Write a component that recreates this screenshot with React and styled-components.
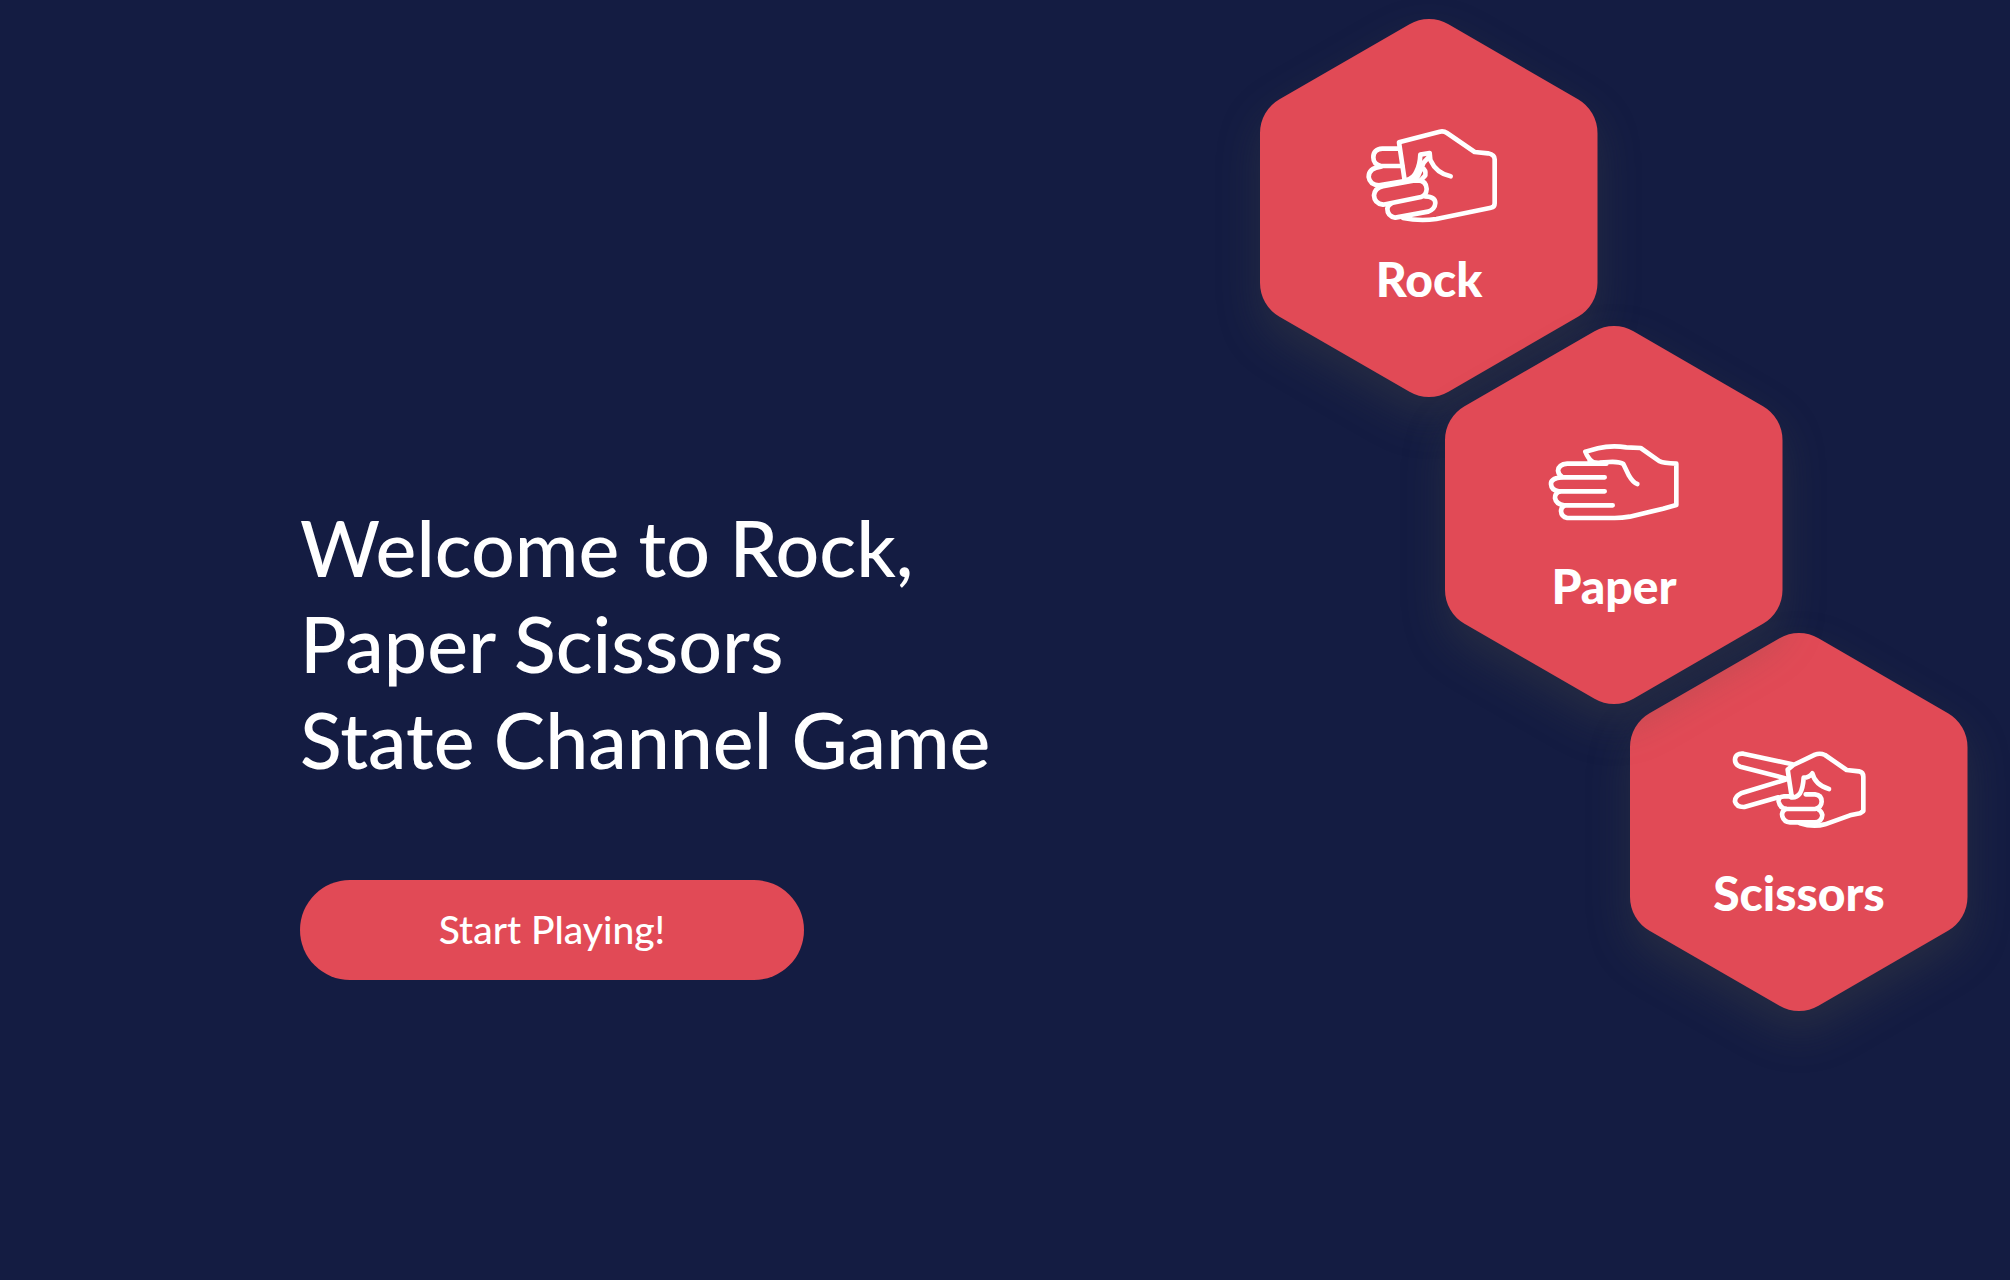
import React from "react";
import styled, { createGlobalStyle } from "styled-components";

const colors = {
  navy: "#141c42",
  coral: "#e14a56",
  white: "#ffffff",
  shadow: "rgba(84, 82, 70, 0.28)",
};

const GlobalStyle = createGlobalStyle`
  *, *::before, *::after { box-sizing: border-box; }
  body {
    margin: 0;
    background: ${colors.navy};
    color: ${colors.white};
    font-family: Lato, "Open Sans", sans-serif;
  }
`;

const Page = styled.main`
  display: flex;
  justify-content: space-between;
  align-items: flex-start;
  min-height: 100vh;
  padding: 19px 42px 0 300px;
`;

const Intro = styled.section`
  display: flex;
  flex-direction: column;
  align-items: flex-start;
  gap: 93px;
  padding-top: 480px;
`;

const Title = styled.h1`
  margin: 0;
  font-size: 77px;
  font-weight: 500;
  line-height: 96px;
  white-space: nowrap;
`;

const StartButton = styled.button`
  width: 504px;
  height: 100px;
  padding: 0 0 3px;
  border: 0;
  border-radius: 50px;
  background: ${colors.coral};
  color: ${colors.white};
  font: 500 39px Lato, "Open Sans", sans-serif;
  cursor: pointer;
`;

const Moves = styled.ul`
  display: flex;
  flex-direction: column;
  margin: 0;
  padding: 0;
  list-style: none;
`;

const Tile = styled.li`
  display: grid;
  grid-template-columns: 338px;
  grid-template-rows: 378px;
  margin-top: ${({ $step }) => ($step ? "-71px" : "0")};
  margin-left: ${({ $step }) => $step * 185}px;
  z-index: ${({ $raised }) => ($raised ? 1 : 0)};
`;

const TileShape = styled.svg`
  grid-area: 1 / 1;
  width: 338px;
  height: 378px;
  overflow: visible;
  fill: ${colors.coral};
  filter: drop-shadow(0 20px 20px ${colors.shadow});
`;

const TileBody = styled.div`
  grid-area: 1 / 1;
  display: flex;
  flex-direction: column;
  align-items: center;
  gap: 19px;
  padding-top: 102px;
  z-index: 1;
`;

const HandIcon = styled.svg`
  width: 160px;
  height: 110px;
  fill: none;
  stroke: ${colors.white};
  stroke-width: 14;
  stroke-linecap: round;
  stroke-linejoin: round;
`;

const Label = styled.span`
  font-size: 48px;
  font-weight: 900;
  line-height: 58px;
`;

const Rock = () => (
  <HandIcon viewBox="-2 3 480 330" aria-hidden="true">
    <path d="M165 181L148 67L270 35Q282 32 292 39L375 96L415 100Q435 104 435 118V250Q435 262 424 263L260 297Q210 304 160 294" />
    <path d="M150 86H98Q71 88 71 112Q71 134 94 138H158" />
    <path d="M94 140Q57 144 57 171Q60 194 88 196L165 183" />
    <path d="M165 183L205 181Q230 182 231 207Q230 226 214 231L100 254Q74 250 73 226Q75 204 100 199L190 182" />
    <path d="M226 229Q257 230 257 249Q256 268 235 275L137 293Q113 288 113 266Q114 256 125 250" />
    <path d="M168 181Q192 176 200 155Q211 135 212 104L240 99L242 120Q260 160 303 169" />
    <path d="M240 108L222 128L205 168L186 181M216 142Q230 150 227 166L214 180" />
  </HandIcon>
);

const Paper = () => (
  <HandIcon viewBox="-2 -6 480 330" aria-hidden="true">
    <path d="M172 94Q160 85 152 65L190 55Q230 45 275 52L318 54L375 94Q385 100 425 101V225L385 236L285 260Q262 264 240 264H98Q80 260 79 243Q80 230 92 226H234" />
    <path d="M215 101H98Q72 103 70 122Q72 136 84 142H210" />
    <path d="M80 142Q48 145 49 162Q50 180 72 184H210" />
    <path d="M76 184Q60 190 61 204Q64 222 88 226" />
    <path d="M165 92Q175 99 195 98L222 96Q255 94 266 102L283 137Q295 158 308 162" />
  </HandIcon>
);

const Scissors = () => (
  <HandIcon viewBox="2 0 480 330" aria-hidden="true">
    <path d="M222 88L75 56Q51 54 50 74Q50 90 66 95L205 131" />
    <path d="M205 133L68 175Q49 184 50 200Q55 217 78 216L180 187" />
    <path d="M220 184L214 145L208 104L225 90L290 59Q305 53 320 60L385 105L422 109Q435 112 435 125V228L425 235L395 241L320 268Q285 278 245 265" />
    <path d="M222 184H197Q179 185 181 200Q185 220 205 222H290Q309 218 310 200Q310 180 290 178H262" />
    <path d="M202 222Q188 230 192 244Q197 261 215 262H290Q311 260 312 240Q310 228 298 222" />
    <path d="M218 187Q235 189 245 175Q254 160 256 128Q272 128 282 115Q290 150 332 162" />
  </HandIcon>
);

const moves = [
  { name: "Rock", Icon: Rock },
  { name: "Paper", Icon: Paper, raised: true },
  { name: "Scissors", Icon: Scissors },
];

export default function App() {
  return (
    <>
      <GlobalStyle />
      <Page>
        <Intro>
          <Title>
            Welcome to Rock,
            <br />
            Paper Scissors
            <br />
            State Channel Game
          </Title>
          <StartButton type="button">Start Playing!</StartButton>
        </Intro>
        <Moves>
          {moves.map(({ name, Icon, raised }, index) => (
            <Tile key={name} $step={index} $raised={raised}>
              <TileShape viewBox="0 0 338 378" aria-hidden="true">
                <path d="M149.5 5.25A39 39 0 0 1 188.5 5.25L318 80.25A39 39 0 0 1 337.5 114V264A39 39 0 0 1 318 297.75L188.5 372.75A39 39 0 0 1 149.5 372.75L19.5 297.75A39 39 0 0 1 0 264V114A39 39 0 0 1 19.5 80.25Z" />
              </TileShape>
              <TileBody>
                <Icon />
                <Label>{name}</Label>
              </TileBody>
            </Tile>
          ))}
        </Moves>
      </Page>
    </>
  );
}
